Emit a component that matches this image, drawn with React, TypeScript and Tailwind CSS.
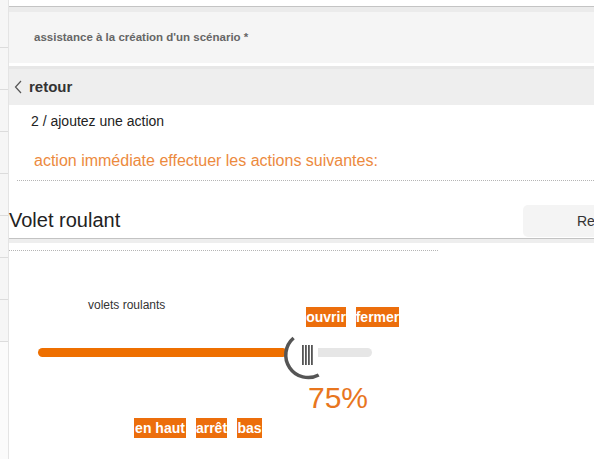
import React from "react";

function Strip() {
  return (
    <div className="w-[9px] shrink-0 flex flex-col border-r border-[#e4e4e4]">
      <div className="h-[48px] bg-[#f6f6f6] border-b border-[#dcdcdc]" />
      {[0, 1, 2, 3, 4, 5, 6].map((i) => (
        <div key={i} className="h-[42px] bg-[#f6f6f6] border-b border-[#dcdcdc]" />
      ))}
      <div className="flex-1 bg-[#fbfbfb]" />
    </div>
  );
}

function Knob() {
  return (
    <svg
      className="absolute left-[242px] top-[-18px]"
      width="55"
      height="52"
      viewBox="0 0 55 52"
    >
      <path
        d="M13.6 8 A22.5 22.5 0 0 0 38.7 45"
        fill="none"
        stroke="#555555"
        strokeWidth="3.5"
      />
      <rect x="22" y="15" width="1.8" height="20" fill="#555555" />
      <rect x="25" y="15" width="1.8" height="20" fill="#555555" />
      <rect x="28" y="15" width="1.8" height="20" fill="#555555" />
      <rect x="31" y="15" width="1.8" height="20" fill="#555555" />
    </svg>
  );
}

function OrangeBtn({ label, w }: { label: string; w: string }) {
  return (
    <span
      className={
        "bg-[#ec6e0c] text-white font-bold text-[14px] leading-[20px] h-[20px] overflow-hidden whitespace-nowrap flex justify-center " +
        w
      }
    >
      {label}
    </span>
  );
}

export default function App() {
  return (
    <div
      className="w-[594px] h-[459px] overflow-hidden flex bg-white"
      style={{ fontFamily: '"Liberation Sans", Arial, sans-serif' }}
    >
      <Strip />
      <div className="flex-1 min-w-0 flex flex-col pt-[6px]">
        {/* header */}
        <div className="h-[57px] shrink-0 bg-[#f5f5f5] border-t border-[#c4c4c4] flex flex-col">
          <div className="h-[5px] bg-[#ebebeb]" />
          <div className="h-[51px] flex items-center pl-[25px] text-[11.5px] font-bold text-[#666666] whitespace-nowrap">
            assistance à la création d'un scénario *
          </div>
        </div>
        {/* retour */}
        <div className="mt-[3px] h-[39px] shrink-0 bg-[#eeeeee] border-t-[3px] border-[#e7e7e7] flex items-center pl-[5px]">
          <svg width="8" height="14" viewBox="0 0 8 14" className="mr-[7px]">
            <polyline points="7,1 1.5,7 7,13" fill="none" stroke="#555" strokeWidth="1.2" />
          </svg>
          <span className="text-[15px] font-bold text-[#333333]">retour</span>
        </div>
        {/* step */}
        <div className="h-[32px] shrink-0 flex items-center pl-[22px] text-[14px] text-[#222222]">
          2 / ajoutez une action
        </div>
        {/* action */}
        <div className="ml-[8px] shrink-0 border-b border-dotted border-[#b5b5b5] pt-[14px] pb-[9px] pl-[17px] text-[16px] leading-[20px] text-[#ec8a3e] whitespace-nowrap">
          action immédiate effectuer les actions suivantes:
        </div>
        {/* title row */}
        <div className="h-[57px] shrink-0 flex justify-between items-start">
          <div className="mt-[27px] text-[20px] leading-[24px] text-[#222222] whitespace-nowrap">
            Volet roulant
          </div>
          <div className="mt-[24px] w-[71px] h-[32px] rounded-l-[5px] bg-[#f4f4f4] flex items-center pl-[54px] text-[14px] text-[#333333]">
            Re
          </div>
        </div>
        <div className="h-[5px] shrink-0 border-t border-[#c3c3c3] bg-[#eeeeee]" />
        <div className="mt-[7px] w-[429px] shrink-0 border-t border-dotted border-[#b5b5b5]" />
        {/* widget */}
        <div className="mt-[47px] h-[29px] shrink-0 flex pl-[79px]">
          <div className="w-[218px] self-start text-[12px] leading-[14px] text-[#333333] whitespace-nowrap">
            volets roulants
          </div>
          <div className="self-end flex gap-[10px]">
            <OrangeBtn label="ouvrir" w="w-[40px]" />
            <OrangeBtn label="fermer" w="w-[43px]" />
          </div>
        </div>
        <div className="mt-[21px] ml-[29px] relative w-[334px] h-[9px] shrink-0">
          <div className="absolute left-0 top-0 h-[9px] w-[249px] rounded-full bg-[#ee6f00]" />
          <div className="absolute left-[280px] top-0 h-[9px] w-[54px] rounded-r-full bg-[#e6e6e6]" />
          <Knob />
        </div>
        <div className="mt-[24px] pl-[299px] text-[30px] leading-[34px] text-[#e8761e] shrink-0">
          75%
        </div>
        <div className="mt-[3px] pl-[125px] flex gap-[10px] shrink-0">
          <OrangeBtn label="en haut" w="w-[52px]" />
          <OrangeBtn label="arrêt" w="w-[31px]" />
          <OrangeBtn label="bas" w="w-[25px]" />
        </div>
      </div>
    </div>
  );
}
